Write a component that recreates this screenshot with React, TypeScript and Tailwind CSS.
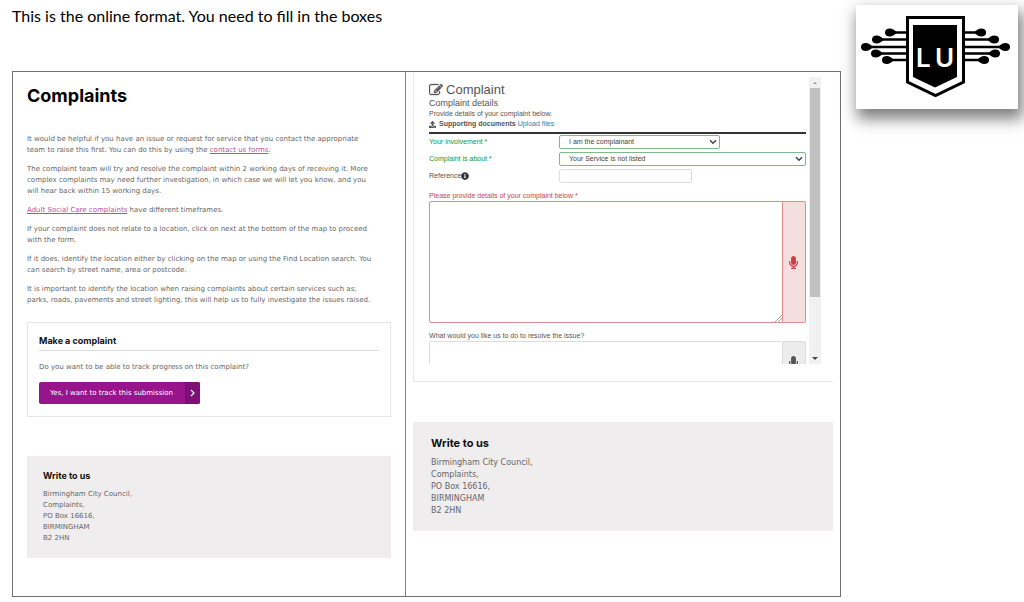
import React from 'react';
import { FaInfoCircle, FaMicrophone, FaUpload } from 'react-icons/fa';
import clsx from 'clsx';

const paragraphClass = 'mb-2';
const linkClass = 'text-[#b8509f] underline';

const AddressCard = ({ large = false }: { large?: boolean }) => (
  <section className={clsx('bg-[#efedee] pt-[14px]', large ? 'h-[109px] px-[18px]' : 'h-[102px] px-4')}>
    <h2
      className={clsx(
        "font-['Inter',sans-serif] font-bold text-[#111]",
        large ? 'text-[11px] leading-[14px]' : 'text-[9px] leading-3',
      )}
    >
      Write to us
    </h2>
    <address
      className={clsx(
        'mt-[7px] not-italic text-[#666]',
        large ? 'text-[8px] leading-[12px]' : 'text-[7px] leading-[11px]',
      )}
    >
      Birmingham City Council,
      <br />
      Complaints,
      <br />
      PO Box 16616,
      <br />
      BIRMINGHAM
      <br />
      B2 2HN
    </address>
  </section>
);

const EditIcon = () => (
  <svg viewBox="0 0 1792 1792" className="h-[14px] w-[14px]" fill="currentColor" stroke="currentColor" strokeWidth="40" aria-hidden="true">
    <path d="M888 1184l116-116-152-152-116 116v56h96v96h56zm440-720q-16-16-33 1l-350 350q-17 17-1 33t33-1l350-350q17-17 1-33zm80 594v190q0 119-84.500 203.500t-203.500 84.500h-832q-119 0-203.500-84.500t-84.500-203.500v-832q0-119 84.500-203.500t203.500-84.500h832q63 0 117 25 15 7 18 23 3 17-9 29l-49 49q-14 14-32 8-23-6-45-6h-832q-66 0-113 47t-47 113v832q0 66 47 113t113 47h832q66 0 113-47t47-113v-126q0-13 9-22l64-64q15-15 35-7t20 29zm-96-738l288 288-672 672h-288v-288zm444 132l-92 92-288-288 92-92q28-28 68-28t68 28l152 152q28 28 28 68t-28 68z" />
  </svg>
);

const Chevron = () => (
  <svg viewBox="0 0 8 6" className="pointer-events-none absolute right-[3px] top-1 h-[6px] w-2" aria-hidden="true">
    <path d="M1 1.200l3 3 3-3" fill="none" stroke="#444" strokeWidth="1.500" />
  </svg>
);

interface SelectProps {
  id: string;
  label: string;
  value: string;
  width: string;
}

const SelectRow = ({ id, label, value, width }: SelectProps) => (
  <div className="flex h-[17px] items-start">
    <label htmlFor={id} className="w-[130px] shrink-0 leading-[14px] text-[#0a9a3c]">
      {label} *
    </label>
    <div className="flex-1">
      <div className={clsx('relative', width)}>
        <select
          id={id}
          className="block h-[14px] w-full appearance-none rounded-[2px] border border-[#7db98a] bg-white pl-[9px] text-[7px] leading-3 text-[#444]"
        >
          <option>{value}</option>
        </select>
        <Chevron />
      </div>
    </div>
  </div>
);

const Scrollbar = () => (
  <div className="flex w-3 shrink-0 flex-col items-center bg-[#f1f1f1]" aria-hidden="true">
    <svg viewBox="0 0 12 11" className="h-[11px] w-3">
      <path d="M4 7l2-2 2 2z" fill="#999" />
    </svg>
    <div className="h-[209px] w-[10px] bg-[#c1c1c1]" />
    <svg viewBox="0 0 12 11" className="mt-auto h-[11px] w-3">
      <path d="M3 4h6l-3 3z" fill="#444" />
    </svg>
  </div>
);

const ComplaintForm = () => (
  <form className="min-w-0 flex-1 overflow-hidden font-['Liberation_Sans',sans-serif] text-[7px] text-[#555]">
    <h2 className="mt-[5px] flex h-4 items-center gap-[3px] text-[13px]">
      <EditIcon />
      Complaint
    </h2>
    <h3 className="text-[9px] leading-[10px]">Complaint details</h3>
    <p className="leading-3">Provide details of your complaint below.</p>
    <p className="flex items-center gap-[2px] border-b-2 border-[#333] pb-1 leading-[8px]">
      <FaUpload className="mr-px h-[7px] w-[7px]" />
      <strong>Supporting documents</strong>
      <a href="#upload" className="text-[#337ab7]">
        Upload files
      </a>
    </p>
    <div className="pt-px">
      <SelectRow id="involvement" label="Your involvement" value="I am the complainant" width="w-[65%]" />
      <SelectRow id="about" label="Complaint is about" value="Your Service is not listed" width="w-full" />
      <div className="flex h-[17px] items-start">
        <label htmlFor="reference" className="flex w-[130px] shrink-0 items-center leading-[14px]">
          Reference
          <FaInfoCircle className="h-2 w-2 text-[#333]" />
        </label>
        <div className="flex-1">
          <input id="reference" type="text" className="block h-[14px] w-[54%] rounded-[2px] border border-[#ddd] px-1" />
        </div>
      </div>
    </div>
    <label htmlFor="details" className="mt-1 block leading-[11px] text-[#c9434c]">
      Please provide details of your complaint below *
    </label>
    <div className="relative flex h-[122px]">
      <textarea id="details" className="min-w-0 flex-1 resize-none rounded-l-[2px] border border-[#e08a8e]" />
      <svg viewBox="0 0 7 7" className="absolute bottom-px right-6 h-[7px] w-[7px]" aria-hidden="true">
        <path d="M0 7l7-7M3 7l4-4" stroke="#888" strokeWidth="0.800" />
      </svg>
      <button
        type="button"
        aria-label="Dictate complaint details"
        className="flex w-[23px] items-center justify-center rounded-r-[2px] border border-l-0 border-[#e08a8e] bg-[#f5dede] text-[#cc3f49]"
      >
        <FaMicrophone className="h-[13px] w-[11px]" />
      </button>
    </div>
    <label htmlFor="resolution" className="mt-[7px] block leading-[11px]">
      What would you like us to do to resolve the issue?
    </label>
    <div className="flex h-[47px]">
      <textarea id="resolution" className="min-w-0 flex-1 resize-none rounded-l-[2px] border border-[#ddd]" />
      <button
        type="button"
        aria-label="Dictate resolution"
        className="flex w-[23px] items-start justify-center rounded-r-[2px] border border-l-0 border-[#ddd] bg-[#ececec] pt-[14px] text-[#555]"
      >
        <FaMicrophone className="h-[13px] w-[11px]" />
      </button>
    </div>
  </form>
);

const LogoCard = () => (
  <div className="mt-[5px] h-[104px] w-[162px] shrink-0 bg-white shadow-[3px_8px_14px_2px_rgba(0,0,0,0.5)]">
    <svg viewBox="0 0 162 104" className="h-full w-full" role="img" aria-label="LU">
      <g stroke="#000" strokeWidth="2.400" fill="none">
        <path d="M34 27.500H130M20 34.500H143M9 42H154M20 48.500H143M31 55H133" />
      </g>
      <g fill="#000">
        <path d="M29 27.500q0-4 5-4 3 0 7 4-4 4-7 4-5 0-5-4zM16 34.500q0-4 5-4 3 0 7 4-4 4-7 4-5 0-5-4zM5 42q0-4 5-4 3 0 7 4-4 4-7 4-5 0-5-4zM15 48.500q0-4 5-4 3 0 7 4-4 4-7 4-5 0-5-4zM26 55q0-4 5-4 3 0 7 4-4 4-7 4-5 0-5-4z" />
        <path d="M130 27.500q0-4-5-4-3 0-7 4 4 4 7 4 5 0 5-4zM143 34.500q0-4-5-4-3 0-7 4 4 4 7 4 5 0 5-4zM154 42q0-4-5-4-3 0-7 4 4 4 7 4 5 0 5-4zM144 48.500q0-4-5-4-3 0-7 4 4 4 7 4 5 0 5-4zM133 55q0-4-5-4-3 0-7 4 4 4 7 4 5 0 5-4z" />
      </g>
      <path d="M51.500 12.500h56v64.500l-28 13.500-28-13.500z" fill="#fff" stroke="#000" strokeWidth="3" />
      <path d="M57 20h44v52l-22 10.500L57 72z" fill="#000" />
      <text x="60" y="62" fill="#fff" fontFamily="Inter, sans-serif" fontSize="26" fontWeight="600">
        L
      </text>
      <text x="79" y="62" fill="#fff" fontFamily="Inter, sans-serif" fontSize="26" fontWeight="600">
        U
      </text>
    </svg>
  </div>
);

export default function App() {
  return (
    <main className="flex items-start gap-[15px] bg-white pl-3 pr-[6px]">
      <div className="min-w-0 flex-1 font-['DejaVu_Sans',sans-serif]">
        <h1 className="pt-1 font-['Lato',sans-serif] text-[16px] leading-6 text-black">
          This is the online format. You need to fill in the boxes
        </h1>
        <div className="mt-[43px] grid grid-cols-[394fr_435fr] border border-[#707070]">
          <article className="border-r border-[#808080] pb-[38px] pl-[14px] pr-[14px] pt-3 text-[7px] leading-[11px] text-[#666]">
            <h2 className="mb-[26px] font-['Inter',sans-serif] text-[18px] font-bold leading-6 text-black">Complaints</h2>
            <p className={paragraphClass}>
              It would be helpful if you have an issue or request for service that you contact the appropriate
              <br />
              team to raise this first. You can do this by using the{' '}
              <a href="#contact" className={linkClass}>contact us forms</a>.
            </p>
            <p className={paragraphClass}>
              The complaint team will try and resolve the complaint within 2 working days of receiving it. More
              <br />
              complex complaints may need further investigation, in which case we will let you know, and you
              <br />
              will hear back within 15 working days.
            </p>
            <p className={paragraphClass}>
              <a href="#adult-social-care" className={linkClass}>Adult Social Care complaints</a> have different timeframes.
            </p>
            <p className={paragraphClass}>
              If your complaint does not relate to a location, click on next at the bottom of the map to proceed
              <br />
              with the form.
            </p>
            <p className={paragraphClass}>
              If it does, identify the location either by clicking on the map or using the Find Location search. You
              <br />
              can search by street name, area or postcode.
            </p>
            <p>
              It is important to identify the location when raising complaints about certain services such as;
              <br />
              parks, roads, pavements and street lighting, this will help us to fully investigate the issues raised.
            </p>

            <section className="mt-4 border border-[#e6e6e6] px-[11px] pb-3 pt-3">
              <h3 className="border-b border-[#ddd] pb-[3px] font-['Inter',sans-serif] text-[9px] font-bold leading-3 text-[#111]">
                Make a complaint
              </h3>
              <p className="mb-[9px] mt-[11px]">Do you want to be able to track progress on this complaint?</p>
              <button type="button" className="flex h-[22px] items-stretch overflow-hidden rounded-[2px] bg-[#98148c] text-white">
                <span className="flex items-center pl-[11px] pr-3">Yes, I want to track this submission</span>
                <span className="flex w-[15px] items-center justify-center bg-[#7d1076]">
                  <svg viewBox="0 0 6 8" className="h-2 w-[6px]" aria-hidden="true">
                    <path d="M1 1l3 3-3 3" fill="none" stroke="currentColor" strokeWidth="1.200" />
                  </svg>
                </span>
              </button>
            </section>

            <div className="mt-[39px]">
              <AddressCard />
            </div>
          </article>

          <div className="pl-[7px] pr-[7px]">
            <section className="flex h-[310px] items-stretch gap-[3px] border-b border-l border-[#e8e8e8] pb-[17px] pl-[15px] pr-3 pt-[5px]">
              <ComplaintForm />
              <Scrollbar />
            </section>
            <div className="mt-10">
              <AddressCard large />
            </div>
          </div>
        </div>
      </div>
      <LogoCard />
    </main>
  );
}
